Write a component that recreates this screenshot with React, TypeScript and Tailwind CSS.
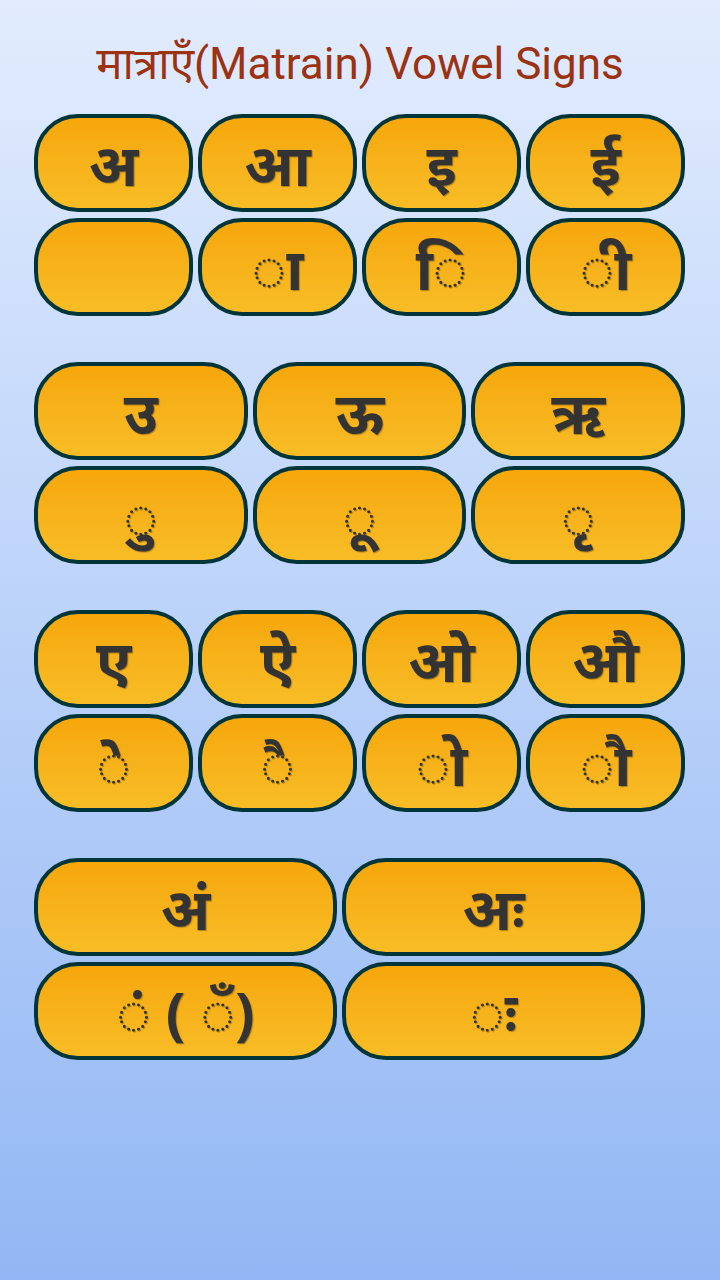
const groups: { cols: string; width: string; top: string[]; bottom: string[] }[] = [
  { cols: 'grid-cols-4', width: 'w-[651px]', top: ['अ', 'आ', 'इ', 'ई'], bottom: ['', 'ा', 'ि', 'ी'] },
  { cols: 'grid-cols-3', width: 'w-[651px]', top: ['उ', 'ऊ', 'ऋ'], bottom: ['ु', 'ू', 'ृ'] },
  { cols: 'grid-cols-4', width: 'w-[651px]', top: ['ए', 'ऐ', 'ओ', 'औ'], bottom: ['े', 'ै', 'ो', 'ौ'] },
  { cols: 'grid-cols-2', width: 'w-[611px]', top: ['अं', 'अः'], bottom: ['ं ( ँ)', 'ः'] },
]

function Key({ label }: { label: string }) {
  return (
    <button className="h-[98px] rounded-[44px] border-4 border-[#023539] bg-gradient-to-b from-[#f6a70a] to-[#f8bd26] flex items-center justify-center text-[58px] font-bold text-[#333333] [text-shadow:1px_1px_1px_rgba(0,0,0,0.3)] [font-family:'Noto_Sans','Noto_Sans_Devanagari',sans-serif]">
      {label}
    </button>
  )
}

export default function App() {
  return (
    <div className="min-h-[1280px] w-[720px] bg-gradient-to-b from-[#e2ecfd] to-[#93b7f4] pt-[36px] pl-[34px]">
      <h1 className="text-center pr-[34px] text-[44px] leading-[56px] text-[#9b3212] [font-family:Roboto,'Noto_Sans',sans-serif]">
        मात्राएँ(Matrain) Vowel Signs
      </h1>
      <div className="mt-[22px] flex flex-col gap-[46px]">
        {groups.map((g, i) => (
          <div key={i} className={`grid ${g.cols} ${g.width} gap-x-[5px] gap-y-[6px]`}>
            {g.top.map((t) => (
              <Key key={t} label={t} />
            ))}
            {g.bottom.map((t, j) => (
              <Key key={j} label={t} />
            ))}
          </div>
        ))}
      </div>
    </div>
  )
}
